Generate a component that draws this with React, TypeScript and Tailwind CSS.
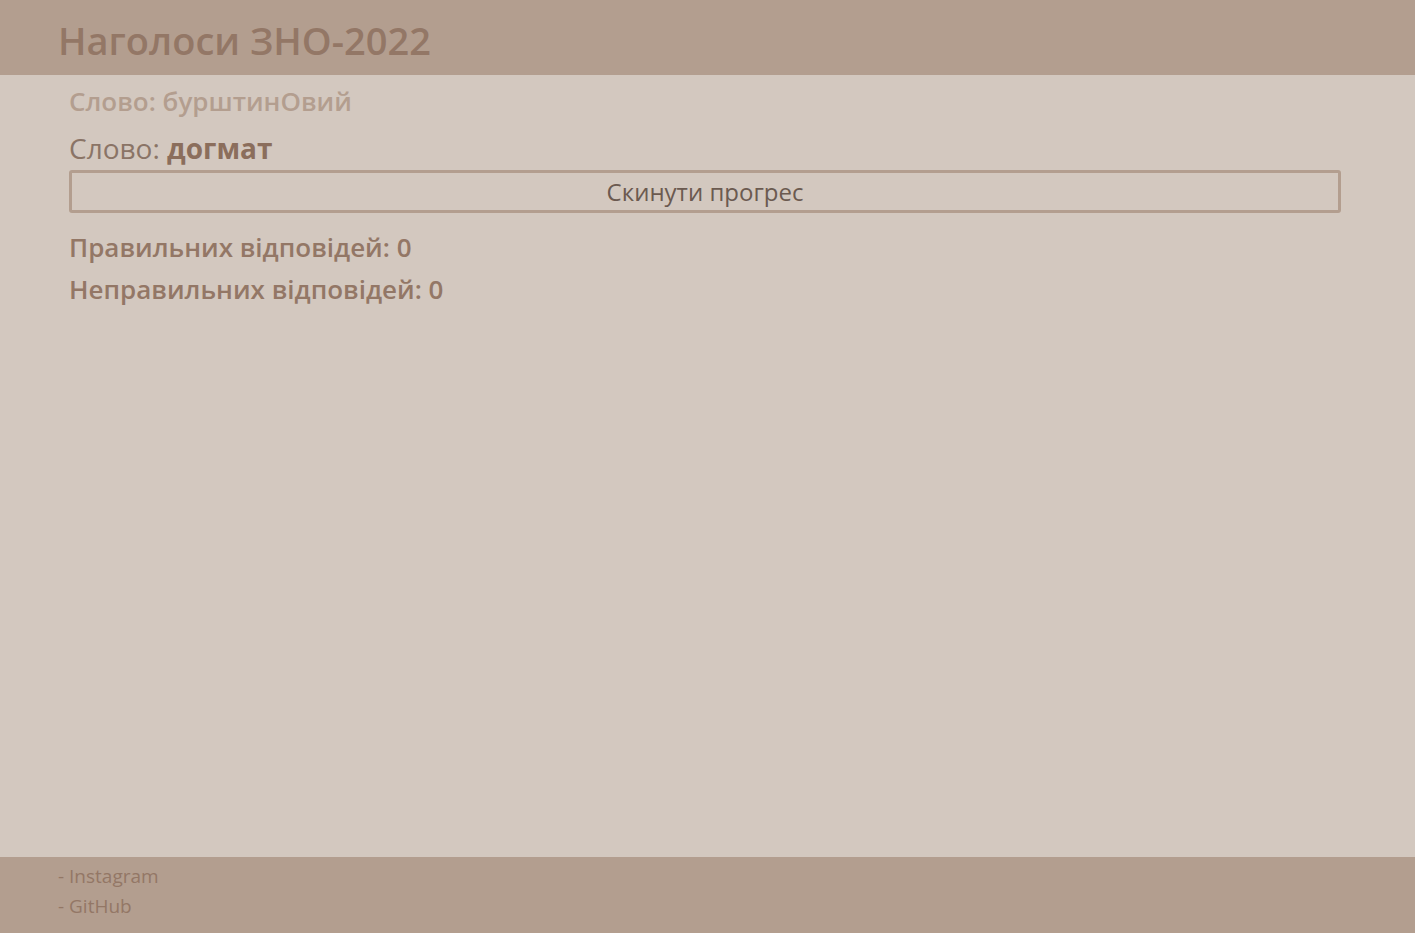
export default function App() {
  return (
    <div className="flex min-h-screen flex-col bg-[#d3c8bf] font-['Open_Sans',sans-serif]">
      <header className="flex h-[75px] items-center bg-[#b39e8f] px-[58px] pt-[4px]">
        <h1 className="text-[38px] font-semibold leading-none text-[#937766]">Наголоси ЗНО-2022</h1>
      </header>
      <main className="flex-1 px-[69px] pt-[9px]">
        <div className="text-[26px] font-semibold leading-[34px] text-[#b39e8f]">Слово: бурштинОвий</div>
        <div className="mt-[13px] text-[28px] leading-[34px] text-[#8a7466]">
          Слово: <span className="font-bold text-[#8b6e5c]">догмат</span>
        </div>
        <button className="mt-[5px] h-[43px] w-[1272px] rounded-[3px] border-[3px] border-[#b39e8f] text-[24px] text-[#6b5a50]">
          Скинути прогрес
        </button>
        <div className="mt-[13px] text-[26px] font-semibold leading-[42px] text-[#937766]">
          <div>Правильних відповідей: 0</div>
          <div>Неправильних відповідей: 0</div>
        </div>
      </main>
      <footer className="flex h-[76px] flex-col bg-[#b39e8f] px-[58px] pt-[4px] text-[19px] leading-[30px] text-[#937766]">
        <a>- Instagram</a>
        <a>- GitHub</a>
      </footer>
    </div>
  )
}
